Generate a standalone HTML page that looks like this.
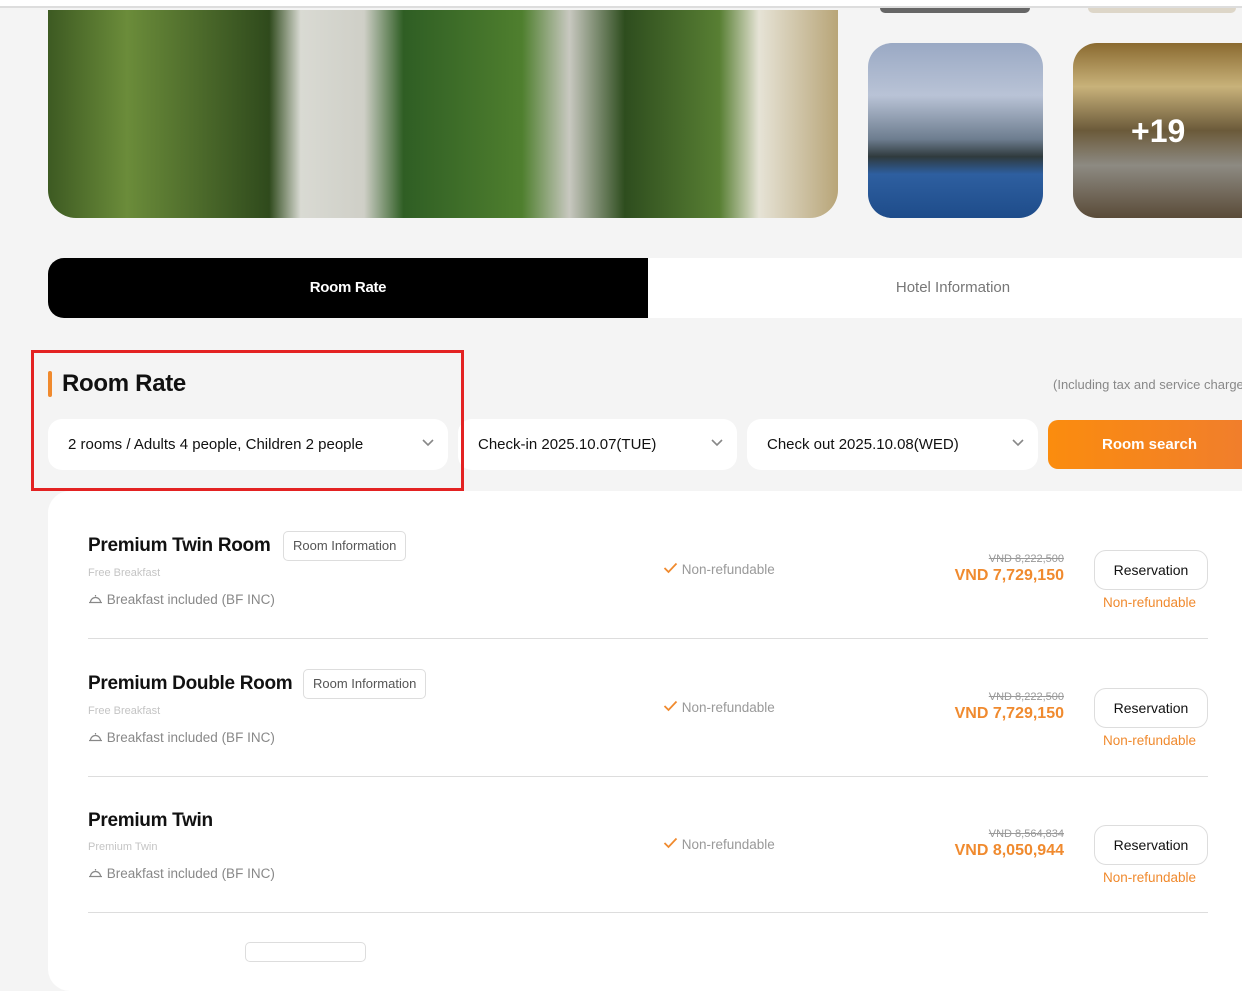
<!DOCTYPE html>
<html><head><meta charset="utf-8"><style>
*{margin:0;padding:0;box-sizing:border-box}
body{width:1242px;height:946px;overflow:hidden;background:#f4f4f4;font-family:"Liberation Sans",sans-serif;position:relative}
.a{position:absolute}
.top{left:0;top:0;width:1242px;height:8px;background:#fff;border-bottom:2px solid #ddd}
.main{left:48px;top:10px;width:790px;height:208px;border-radius:0 0 28px 28px;overflow:hidden;background:linear-gradient(90deg,#3d5a22 0%,#6b8c3a 10%,#2f4a1c 28%,#d9dad3 32%,#cfcfc7 40%,#2f5e24 45%,#4f7f2e 60%,#c8c8c0 66%,#2e4d1e 73%,#587f33 85%,#e6e3d6 90%,#b8a578 100%)}
.th1{left:868px;top:43px;width:175px;height:175px;border-radius:24px;background:linear-gradient(180deg,#9aa9c4 0%,#b9c3d6 30%,#6d7d8f 55%,#2f3a3d 65%,#2e5fa0 75%,#1e4c8a 100%)}
.th2{left:1073px;top:43px;width:200px;height:175px;border-radius:24px;background:linear-gradient(180deg,#8a6a30 0%,#c8b27a 25%,#6b5a3a 50%,#8d8a82 70%,#5a4b38 100%);color:#fff;font-size:32px;font-weight:bold;padding:70px 0 0 58px}
.tab1{left:48px;top:258px;width:600px;height:60px;background:#000;border-radius:16px 0 0 16px;color:#fff;font-size:15px;font-weight:bold;text-align:center;line-height:60px;letter-spacing:-.3px}
.tab2{left:648px;top:258px;width:610px;height:60px;background:#fff;border-radius:0 16px 16px 0;color:#777;font-size:15px;text-align:center;line-height:60px}
.h{left:62px;top:370px;font-size:24px;font-weight:bold;color:#111;letter-spacing:-.3px}
.bar{left:48px;top:371px;width:4px;height:26px;background:#f08a2e;border-radius:2px}
.note{left:1053px;top:377px;font-size:13px;color:#888;white-space:nowrap}
.sel{top:419px;height:51px;background:#fff;border-radius:14px;font-size:15px;color:#111;line-height:51px;padding-left:20px}
.sel svg{position:absolute;right:14px;top:20px}
.btn{left:1048px;top:420px;width:210px;height:49px;border-radius:10px;background:linear-gradient(90deg,#fb8c0e,#f07d2e);color:#fff;font-size:15px;font-weight:bold;line-height:49px;padding-left:54px}
.card{left:48px;top:491px;width:1220px;height:500px;background:#fff;border-radius:22px}
.red{left:31px;top:350px;width:433px;height:141px;border:3px solid #e32222}
.name{font-size:19px;font-weight:bold;color:#111;letter-spacing:-.3px}
.ri{height:30px;border:1px solid #ddd;border-radius:5px;font-size:13px;color:#555;line-height:28px;padding:0 9px}
.sub{font-size:11px;color:#c4c4c4}
.bf{font-size:13.5px;color:#888}
.nr{font-size:13.5px;color:#999}
.old{font-size:11px;color:#999;text-decoration:line-through;text-align:right;width:150px}
.price{font-size:16px;font-weight:bold;color:#f08a2e;text-align:right;width:200px}
.res{width:114px;height:40px;border:1px solid #ddd;border-radius:12px;font-size:14px;color:#111;text-align:center;line-height:38px}
.nr2{font-size:13.5px;color:#f08a2e}
.div{left:88px;width:1120px;height:1px;background:#ddd}
</style></head><body>
<div class="a top"></div>
<div class="a" style="left:880px;top:8px;width:150px;height:5px;background:#666;border-radius:0 0 8px 8px"></div>
<div class="a" style="left:1088px;top:8px;width:148px;height:5px;background:#ddd6c8;border-radius:0 0 8px 8px"></div>
<div class="a main"></div>
<div class="a th1"></div>
<div class="a th2">+19</div>
<div class="a tab1">Room Rate</div>
<div class="a tab2">Hotel Information</div>
<div class="a bar"></div>
<div class="a h">Room Rate</div>
<div class="a note">(Including tax and service charge)</div>
<div class="a sel" style="left:48px;width:400px">2 rooms / Adults 4 people, Children 2 people<svg width="12" height="8" viewBox="0 0 12 8"><path d="M1 1l5 5 5-5" stroke="#888" stroke-width="1.6" fill="none"/></svg></div>
<div class="a sel" style="left:458px;width:279px">Check-in 2025.10.07(TUE)<svg width="12" height="8" viewBox="0 0 12 8"><path d="M1 1l5 5 5-5" stroke="#888" stroke-width="1.6" fill="none"/></svg></div>
<div class="a sel" style="left:747px;width:291px">Check out 2025.10.08(WED)<svg width="12" height="8" viewBox="0 0 12 8"><path d="M1 1l5 5 5-5" stroke="#888" stroke-width="1.6" fill="none"/></svg></div>
<div class="a btn">Room search</div>
<div class="a red"></div>
<div class="a card"></div>

<!-- row1 -->
<div class="a name" style="left:88px;top:535px">Premium Twin Room</div>
<div class="a ri" style="left:283px;top:531px">Room Information</div>
<div class="a sub" style="left:88px;top:567px">Free Breakfast</div>
<div class="a bf" style="left:88px;top:592px"><svg width="15" height="12" viewBox="0 0 15 12"><path d="M1 10.5h13M2.5 10.5a5 5 0 0 1 10 0M7.5 4.5v-1.5" stroke="#888" stroke-width="1.2" fill="none"/></svg> Breakfast included (BF INC)</div>
<div class="a nr" style="left:663px;top:562px"><svg width="15" height="12" viewBox="0 0 15 12"><path d="M1.5 6l4 4 8-8.5" stroke="#f08a2e" stroke-width="1.8" fill="none"/></svg> Non-refundable</div>
<div class="a old" style="left:914px;top:553px">VND 8,222,500</div>
<div class="a price" style="left:864px;top:567px">VND 7,729,150</div>
<div class="a res" style="left:1094px;top:550px">Reservation</div>
<div class="a nr2" style="left:1103px;top:595px">Non-refundable</div>
<div class="a div" style="top:638px"></div>

<!-- row2 -->
<div class="a name" style="left:88px;top:673px">Premium Double Room</div>
<div class="a ri" style="left:303px;top:669px">Room Information</div>
<div class="a sub" style="left:88px;top:705px">Free Breakfast</div>
<div class="a bf" style="left:88px;top:730px"><svg width="15" height="12" viewBox="0 0 15 12"><path d="M1 10.5h13M2.5 10.5a5 5 0 0 1 10 0M7.5 4.5v-1.5" stroke="#888" stroke-width="1.2" fill="none"/></svg> Breakfast included (BF INC)</div>
<div class="a nr" style="left:663px;top:700px"><svg width="15" height="12" viewBox="0 0 15 12"><path d="M1.5 6l4 4 8-8.5" stroke="#f08a2e" stroke-width="1.8" fill="none"/></svg> Non-refundable</div>
<div class="a old" style="left:914px;top:691px">VND 8,222,500</div>
<div class="a price" style="left:864px;top:705px">VND 7,729,150</div>
<div class="a res" style="left:1094px;top:688px">Reservation</div>
<div class="a nr2" style="left:1103px;top:733px">Non-refundable</div>
<div class="a div" style="top:776px"></div>

<!-- row3 -->
<div class="a name" style="left:88px;top:810px">Premium Twin</div>
<div class="a sub" style="left:88px;top:841px">Premium Twin</div>
<div class="a bf" style="left:88px;top:866px"><svg width="15" height="12" viewBox="0 0 15 12"><path d="M1 10.5h13M2.5 10.5a5 5 0 0 1 10 0M7.5 4.5v-1.5" stroke="#888" stroke-width="1.2" fill="none"/></svg> Breakfast included (BF INC)</div>
<div class="a nr" style="left:663px;top:837px"><svg width="15" height="12" viewBox="0 0 15 12"><path d="M1.5 6l4 4 8-8.5" stroke="#f08a2e" stroke-width="1.8" fill="none"/></svg> Non-refundable</div>
<div class="a old" style="left:914px;top:828px">VND 8,564,834</div>
<div class="a price" style="left:864px;top:842px">VND 8,050,944</div>
<div class="a res" style="left:1094px;top:825px">Reservation</div>
<div class="a nr2" style="left:1103px;top:870px">Non-refundable</div>
<div class="a div" style="top:912px"></div>
<div class="a" style="left:245px;top:942px;width:121px;height:20px;border:1px solid #ddd;border-radius:5px"></div>
</body></html>
